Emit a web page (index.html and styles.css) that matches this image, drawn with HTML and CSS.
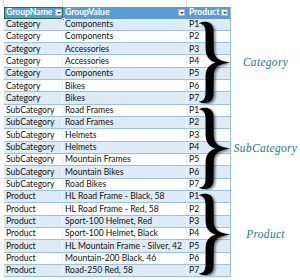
FILE: index.html
```html
<!DOCTYPE html>
<html>
<head>
<meta charset="utf-8">
<link rel="stylesheet" href="styles.css">
</head>
<body>
<svg class="defs" width="0" height="0" aria-hidden="true">
  <defs>
    <filter id="shadow" x="-30%" y="-10%" width="160%" height="120%">
      <feDropShadow dx="1.8" dy="1.4" stdDeviation="1.1" flood-color="#000" flood-opacity="0.5"/>
    </filter>
    <symbol id="brace" viewBox="0 0 33 83">
      <path d="M0.5 2.5 C6 -0.5 15 0 15.5 9 L15.8 29 C16 37 21 40 32 41.5 C21 43 16 46 15.8 54 L15.5 74 C15 82.5 6 83.5 0.5 80.5 C4.5 80.5 7.5 78.5 7.5 72 L7.6 55 C7.8 47 11.5 43.5 18 41.5 C11.5 39.5 7.8 36 7.6 28 L7.5 11 C7.5 4.5 4.5 2.5 0.5 2.5 Z" fill="#000" filter="url(#shadow)"/>
    </symbol>
  </defs>
</svg>
<div class="sheet">
  <div class="topstrip">
    <span class="tc c1"></span><span class="tc c2"></span><span class="tc c3"></span><span class="tc c4"></span>
  </div>
  <div class="main">
    <div class="table">
      <div class="row head">
        <div class="cell c1 sel">GroupName<span class="dd"></span><span class="handle"></span></div>
        <div class="cell c2">GroupValue<span class="dd"></span></div>
        <div class="cell c3">Product<span class="dd"></span></div>
      </div>
      <div class="row band"><div class="cell c1">Category</div><div class="cell c2">Components</div><div class="cell c3">P1</div></div>
      <div class="row"><div class="cell c1">Category</div><div class="cell c2">Components</div><div class="cell c3">P2</div></div>
      <div class="row band"><div class="cell c1">Category</div><div class="cell c2">Accessories</div><div class="cell c3">P3</div></div>
      <div class="row"><div class="cell c1">Category</div><div class="cell c2">Accessories</div><div class="cell c3">P4</div></div>
      <div class="row band"><div class="cell c1">Category</div><div class="cell c2">Components</div><div class="cell c3">P5</div></div>
      <div class="row"><div class="cell c1">Category</div><div class="cell c2">Bikes</div><div class="cell c3">P6</div></div>
      <div class="row band"><div class="cell c1">Category</div><div class="cell c2">Bikes</div><div class="cell c3">P7</div></div>
      <div class="row"><div class="cell c1">SubCategory</div><div class="cell c2">Road Frames</div><div class="cell c3">P1</div></div>
      <div class="row band"><div class="cell c1">SubCategory</div><div class="cell c2">Road Frames</div><div class="cell c3">P2</div></div>
      <div class="row"><div class="cell c1">SubCategory</div><div class="cell c2">Helmets</div><div class="cell c3">P3</div></div>
      <div class="row band"><div class="cell c1">SubCategory</div><div class="cell c2">Helmets</div><div class="cell c3">P4</div></div>
      <div class="row"><div class="cell c1">SubCategory</div><div class="cell c2">Mountain Frames</div><div class="cell c3">P5</div></div>
      <div class="row band"><div class="cell c1">SubCategory</div><div class="cell c2">Mountain Bikes</div><div class="cell c3">P6</div></div>
      <div class="row"><div class="cell c1">SubCategory</div><div class="cell c2">Road Bikes</div><div class="cell c3">P7</div></div>
      <div class="row band"><div class="cell c1">Product</div><div class="cell c2">HL Road Frame - Black, 58</div><div class="cell c3">P1</div></div>
      <div class="row"><div class="cell c1">Product</div><div class="cell c2">HL Road Frame - Red, 58</div><div class="cell c3">P2</div></div>
      <div class="row band"><div class="cell c1">Product</div><div class="cell c2">Sport-100 Helmet, Red</div><div class="cell c3">P3</div></div>
      <div class="row"><div class="cell c1">Product</div><div class="cell c2">Sport-100 Helmet, Black</div><div class="cell c3">P4</div></div>
      <div class="row band"><div class="cell c1">Product</div><div class="cell c2">HL Mountain Frame - Silver, 42</div><div class="cell c3">P5</div></div>
      <div class="row"><div class="cell c1">Product</div><div class="cell c2">Mountain-200 Black, 46</div><div class="cell c3">P6</div></div>
      <div class="row band last"><div class="cell c1">Product</div><div class="cell c2">Road-250 Red, 58</div><div class="cell c3">P7</div></div>
    </div>
    <div class="notes">
      <div class="group">
        <svg class="brace" width="33" height="83"><use href="#brace"/></svg>
        <span class="label">Category</span>
      </div>
      <div class="group">
        <svg class="brace" width="33" height="83"><use href="#brace"/></svg>
        <span class="label">SubCategory</span>
      </div>
      <div class="group">
        <svg class="brace" width="33" height="83"><use href="#brace"/></svg>
        <span class="label">Product</span>
      </div>
    </div>
  </div>
</div>
</body>
</html>
```
FILE: styles.css
```css
* { box-sizing: border-box; }
html, body { margin: 0; padding: 0; background: #fff; }
body {
  width: 300px;
  height: 280px;
  overflow: hidden;
  font-family: Lato, "Liberation Sans", sans-serif;
  font-size: 8.6px;
  color: #111;
}
.defs { position: absolute; }
.sheet { display: flex; flex-direction: column; }
.topstrip {
  height: 7px;
  display: grid;
  grid-template-columns: 4px 59px 124px 44px 1fr;
}
.tc { border-right: 1px solid #dadada; }
.tc.c4 { border-right: 0; }
.main { display: flex; padding-left: 4px; }
.table { width: 227px; border-right: 1px solid #9bc2e6; }
.row {
  display: grid;
  grid-template-columns: 59px 124px 44px;
  height: 12.33px;
  border-bottom: 1px solid #9bc2e6;
}
.row.band { background: #ddebf7; }
.row.head {
  height: 11.5px;
  background: #5b9bd5;
  color: #fff;
  font-weight: bold;
  border-bottom: 0;
}
.cell {
  display: flex;
  align-items: center;
  padding-left: 2px;
  white-space: nowrap;
  overflow: hidden;
  line-height: 1;
  border-right: 1px solid #e4edf7;
}
.row.band .cell { border-right-color: #f2f7fc; }
.cell.c3 { border-right: 0; }
.head .cell { justify-content: space-between; padding-right: 2px; border-right: 0; position: relative; overflow: visible; }
.head .cell.c1 { padding-right: 1px; }
.head .cell.c3 { padding-right: 3px; }
.cell.sel { outline: 1.5px solid #217346; outline-offset: -1px; }
.handle {
  position: absolute;
  right: -2px;
  bottom: -2px;
  width: 3px;
  height: 3px;
  background: #217346;
  border: 0.5px solid #fff;
}
.dd {
  width: 7px;
  height: 7px;
  background: #f3f3f3;
  border: 1px solid #b4b4b4;
  display: flex;
  align-items: center;
  justify-content: center;
  flex: none;
}
.dd::after {
  content: "";
  border-left: 2px solid transparent;
  border-right: 2px solid transparent;
  border-top: 2px solid #444;
}
.notes { flex: 1; display: flex; flex-direction: column; margin-top: 11.5px; }
.group {
  position: relative;
  height: 86.31px;
  display: flex;
  align-items: center;
  justify-content: center;
}
.brace {
  position: absolute;
  left: -33px;
  top: 2px;
}
.label {
  font-family: "Liberation Serif", serif;
  font-style: italic;
  font-size: 11.5px;
  color: #1c7b87;
  letter-spacing: 0.3px;
}
```
